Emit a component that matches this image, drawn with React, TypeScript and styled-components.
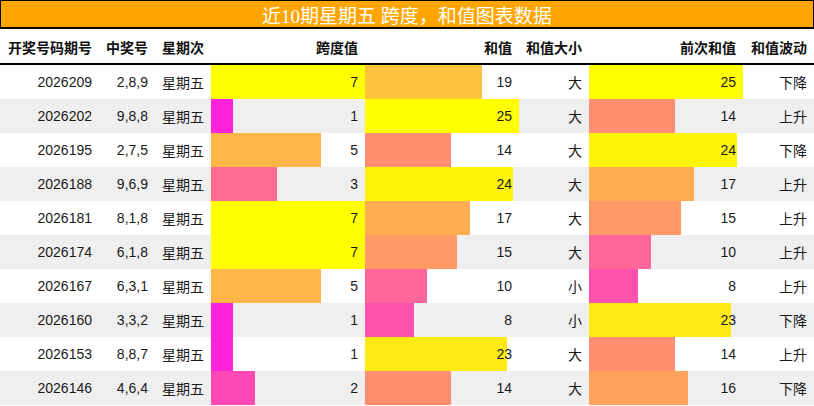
import React from "react";
import styled, { createGlobalStyle } from "styled-components";

const Global = createGlobalStyle`
  html, body { margin: 0; padding: 0; background: #fff; }
  body { font-family: "Liberation Sans", "Noto Sans CJK SC", sans-serif; }
`;

const COLS = "99px 56px 56px 154px 154px 70px 154px 71px";

const Page = styled.div`
  width: 814px;
  display: flex;
  flex-direction: column;
`;

const TitleBar = styled.div`
  height: 24px;
  padding-top: 2px;
  background: #ffa500;
  border: 1px solid #000;
  border-bottom-width: 2px;
  color: #fff;
  font-family: "Liberation Serif", "Noto Sans CJK SC", serif;
  font-size: 19px;
  line-height: 27px;
  text-align: center;
  white-space: nowrap;
`;

const HeaderRow = styled.div`
  display: grid;
  grid-template-columns: ${COLS};
  height: 34px;
  border-bottom: 2px solid #000;
`;

const HeadCell = styled.div`
  display: flex;
  align-items: center;
  justify-content: flex-end;
  padding: 2px 7px 0 0;
  font-size: 14px;
  font-weight: bold;
  color: #111;
  white-space: nowrap;
`;

const Row = styled.div<{ $alt: boolean }>`
  display: grid;
  grid-template-columns: ${COLS};
  height: 34px;
  background: ${(p) => (p.$alt ? "#efefef" : "#ffffff")};
`;

const Cell = styled.div`
  display: flex;
  align-items: center;
  justify-content: flex-end;
  padding-right: 7px;
  font-size: 14px;
  color: #1a1a1a;
  white-space: nowrap;
`;

const BarCell = styled(Cell)<{ $t: number }>`
  background: ${(p) => {
    const g = Math.round(255 * p.$t);
    const b = Math.round(255 * (1 - p.$t));
    const pct = (p.$t * 100).toFixed(3);
    return `linear-gradient(to right, rgb(255, ${g}, ${b}) 0 ${pct}%, transparent ${pct}% 100%)`;
  }};
`;

type R = [string, string, number, number, string, number, string];

const rows: R[] = [
  ["2026209", "2,8,9", 7, 19, "大", 25, "下降"],
  ["2026202", "9,8,8", 1, 25, "大", 14, "上升"],
  ["2026195", "2,7,5", 5, 14, "大", 24, "下降"],
  ["2026188", "9,6,9", 3, 24, "大", 17, "上升"],
  ["2026181", "8,1,8", 7, 17, "大", 15, "上升"],
  ["2026174", "6,1,8", 7, 15, "大", 10, "上升"],
  ["2026167", "6,3,1", 5, 10, "小", 8, "上升"],
  ["2026160", "3,3,2", 1, 8, "小", 23, "下降"],
  ["2026153", "8,8,7", 1, 23, "大", 14, "上升"],
  ["2026146", "4,6,4", 2, 14, "大", 16, "下降"],
];

const headers = ["开奖号码期号", "中奖号", "星期次", "跨度值", "和值", "和值大小", "前次和值", "和值波动"];

export default function App() {
  return (
    <Page>
      <Global />
      <TitleBar>近10期星期五 跨度，和值图表数据</TitleBar>
      <HeaderRow>
        {headers.map((h) => (
          <HeadCell key={h}>{h}</HeadCell>
        ))}
      </HeaderRow>
      {rows.map((r, i) => (
        <Row key={r[0]} $alt={i % 2 === 1}>
          <Cell>{r[0]}</Cell>
          <Cell>{r[1]}</Cell>
          <Cell>星期五</Cell>
          <BarCell $t={r[2] / 7}>{r[2]}</BarCell>
          <BarCell $t={r[3] / 25}>{r[3]}</BarCell>
          <Cell>{r[4]}</Cell>
          <BarCell $t={r[5] / 25}>{r[5]}</BarCell>
          <Cell>{r[6]}</Cell>
        </Row>
      ))}
    </Page>
  );
}
